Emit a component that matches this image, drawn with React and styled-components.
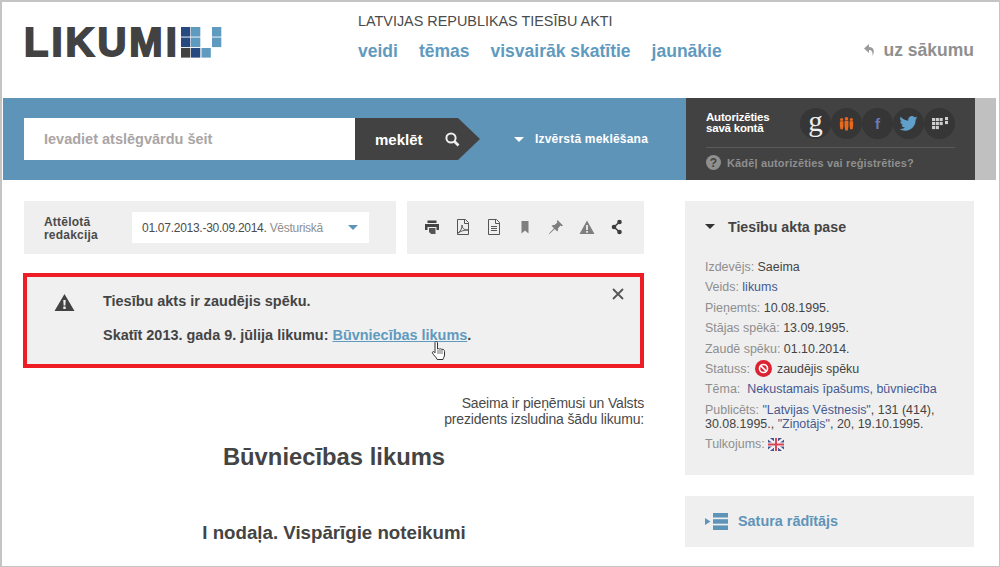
import React from "react";
import styled, { createGlobalStyle } from "styled-components";

const Global = createGlobalStyle`
  html, body { margin: 0; padding: 0; background: #fff; }
  body { font-family: "Liberation Sans", Arial, sans-serif; }
  * { box-sizing: border-box; }
`;
const Page = styled.div`
  width: 1000px; height: 567px; overflow: hidden; background: #fff;
  border: solid #c4c4c4; border-width: 2px 1px 1px 2px;
  display: flex; flex-direction: column; color: #444;
`;
const Header = styled.header`
  height: 96px; display: flex; padding: 0 25px 0 22px; flex: none;
`;
const LogoBox = styled.div`
  width: 334px; display: flex; align-items: flex-start; padding-top: 24px; gap: 1px;
`;
const LogoText = styled.div`
  font: 900 40px/32px "Liberation Sans", sans-serif; color: #424242;
  -webkit-text-stroke: 1.8px #424242; letter-spacing: 3px;
  height: 32px;
`;
const HeadMid = styled.div`
  flex: 1; padding-top: 11px;
`;
const Tagline = styled.div`
  font-size: 14.4px; line-height: 16px; color: #4b4b4b;
`;
const NavRow = styled.nav`
  display: flex; gap: 21px; margin-top: 12px; align-items: center;
`;
const NavLink = styled.a`
  font-size: 17.5px; font-weight: 700; line-height: 20px; color: #5f9abf;
`;
const Home = styled.a`
  margin-left: auto; margin-top: 38px; height: 20px; display: flex; align-items: center;
  gap: 9px; font-size: 17.5px; font-weight: 700; color: #8f8f8f; flex: none;
`;
const Banner = styled.section`
  height: 82px; margin-left: 1px; margin-right: 3px; display: flex; flex: none; background: #c0c0c0;
`;
const SearchZone = styled.div`
  width: 683px; background: #5f94b9; display: flex; align-items: center; padding-left: 21px;
`;
const SearchInput = styled.div`
  width: 331px; height: 42px; background: #fff; display: flex; align-items: center; padding-left: 20px;
  font-size: 14.5px; font-weight: 700; color: #aaa5a5;
`;
const SearchButton = styled.div`
  width: 125px; height: 42px; background: #424242; color: #fff; display: flex; align-items: center;
  padding-left: 20px; gap: 22px; font-size: 15px; font-weight: 700;
  clip-path: polygon(0 0, 103px 0, 125px 50%, 103px 100%, 0 100%);
`;
const Advanced = styled.div`
  display: flex; align-items: center; gap: 11px; margin-left: 34px; color: #fff; font-size: 12px; font-weight: 700;
  letter-spacing: .2px;
`;
const TriDown = styled.span`
  width: 0; height: 0; border: solid transparent; border-width: 5px 5.5px 0; border-top-color: ${p => p.$c || "#fff"};
  display: block; flex: none;
`;
const AuthZone = styled.div`
  width: 289px; background: #424242; padding: 10px 20px 0 20px;
`;
const AuthTop = styled.div`
  display: flex; align-items: center; height: 31px; justify-content: space-between;
`;
const AuthTitle = styled.div`
  font-size: 11.5px; line-height: 11px; font-weight: 700; color: #fff; letter-spacing: -.2px; margin-top: -2px;
`;
const Socials = styled.div`
  display: flex;
`;
const Social = styled.span`
  width: 31px; height: 31px; border-radius: 50%; background: #363636; display: flex; align-items: center;
  justify-content: center;
`;
const GlyphG = styled.span`
  font: 400 29px/24px "Liberation Serif", serif; color: #eee; margin-top: -5px;
`;
const GlyphF = styled.span`
  font: 700 15px/16px "Liberation Sans", sans-serif; color: #6f78b5;
`;
const AuthHelp = styled.div`
  margin-top: 8px; border-top: 1px solid #5a5a5a; display: flex; align-items: center; gap: 6px; height: 30px;
  font-size: 11px; font-weight: 700; color: #8f8f8f; letter-spacing: .15px;
`;
const Help = styled.span`
  width: 15px; height: 15px; border-radius: 50%; background: #8f8f8f; color: #424242; font-size: 12px;
  font-weight: 700; display: flex; align-items: center; justify-content: center;
`;
const Body = styled.div`
  display: flex; padding: 21px 0 0 22px; gap: 41px; flex: none;
`;
const Main = styled.main`
  width: 620px; display: flex; flex-direction: column;
`;
const Toolbar = styled.div`
  display: flex; gap: 11px; height: 53px;
`;
const Edition = styled.div`
  width: 372px; background: #efefef; display: flex; align-items: center; padding-left: 20px;
`;
const EditionLabel = styled.div`
  width: 88px; font-size: 12px; line-height: 13px; font-weight: 700; color: #4a4a4a; letter-spacing: .2px; margin-top: 2px;
`;
const Select = styled.div`
  width: 237px; height: 31px; background: #fff; display: flex; align-items: center; padding: 0 11px 0 10px;
  font-size: 12px; color: #4c4c4c; letter-spacing: -.27px;
`;
const Muted = styled.span`
  color: #8f8f8f;
`;
const SelectText = styled.span`
  flex: 1;
`;
const Tools = styled.div`
  flex: 1; background: #efefef; display: flex; align-items: center; padding: 0 0 2px 17px; gap: 15px;
`;
const Tool = styled.svg`
  width: 16px; height: 16px; flex: none; display: block;
`;
const Alert = styled.div`
  margin-top: 19px; margin-left: -1px; height: 95px; border: 4px solid #ee1c25; background: #f0f0f0;
  display: flex; position: relative; padding: 16px 0 0 27px;
`;
const AlertIcon = styled.svg`
  width: 21px; height: 19px; flex: none;
`;
const AlertBody = styled.div`
  margin-left: 28px; font-size: 14.45px; font-weight: 700; color: #444;
`;
const AlertLine = styled.div`
  line-height: 16px; margin-bottom: ${p => p.$mb || 0}px;
`;
const AlertLink = styled.a`
  color: #5f9abf; text-decoration: underline;
`;
const Close = styled.svg`
  position: absolute; right: 16px; top: 11px; width: 12px; height: 12px;
`;
const Cursor = styled.svg`
  position: absolute; left: 404px; top: 63px; width: 16px; height: 21px;
`;
const Intro = styled.div`
  margin-top: 27px; text-align: right; font-size: 14px; line-height: 16px; color: #4a4a4a;
  letter-spacing: -.17px;
`;
const Title = styled.h1`
  margin: 16px 0 0; font-size: 23.8px; line-height: 28px; font-weight: 700; color: #444; text-align: center;
`;
const Chapter = styled.h2`
  margin: 51px 0 0; font-size: 18.7px; line-height: 22px; font-weight: 700; color: #444; text-align: center;
`;
const Side = styled.aside`
  width: 289px; display: flex; flex-direction: column; gap: 21px;
`;
const Passport = styled.div`
  background: #efefef; height: 274px; padding: 17px 20px 0 20px;
`;
const PassportHead = styled.div`
  display: flex; align-items: center; gap: 13px; font-size: 14.2px; font-weight: 700; color: #444; height: 17px;
`;
const Facts = styled.div`
  margin-top: 25px; font-size: 12.45px; color: #444;
`;
const Fact = styled.div`
  line-height: 14px; height: ${p => p.$h || 14}px; margin-bottom: 6.4px; display: ${p => p.$flex ? "flex" : "block"}; align-items: center;
`;
const Key = styled.span`
  color: #8e8e8e;
`;
const Topic = styled.a`
  color: #46598f;
`;
const Stop = styled.span`
  width: 17px; height: 17px; border-radius: 50%; background: #dc2232; margin: -2px 5px; display: inline-flex;
  align-items: center; justify-content: center; flex: none;
`;
const TocCard = styled.div`
  background: #efefef; height: 51px; display: flex; align-items: center; padding: 0 0 1px 20px; gap: 10px;
  font-size: 14.4px; font-weight: 700; color: #5f94b9;
`;

const Squares = () => (
  <svg width="41" height="31" viewBox="0 0 41 31" style={{ flex: "none", marginTop: "1px" }}>
    {[
      [0, 0, "#264a80"], [10, 0, "#5f9abf"], [31, 0, "#5f9abf"],
      [0, 10.5, "#264a80"], [10, 10.5, "#5f9abf"], [31, 10.5, "#5f9abf"],
      [0, 21, "#424242"], [10, 21, "#264a80"], [20.5, 21, "#5f9abf"],
    ].map(([x, y, c], i) => <rect key={i} x={x} y={y} width="9.3" height="9.6" fill={c} />)}
  </svg>
);

export default function App() {
  return (
    <Page>
      <Global />
      <Header>
        <LogoBox>
          <LogoText>LIKUMI</LogoText>
          <Squares />
        </LogoBox>
        <HeadMid>
          <Tagline>LATVIJAS REPUBLIKAS TIESĪBU AKTI</Tagline>
          <NavRow>
            <NavLink>veidi</NavLink>
            <NavLink>tēmas</NavLink>
            <NavLink>visvairāk skatītie</NavLink>
            <NavLink>jaunākie</NavLink>
          </NavRow>
        </HeadMid>
        <Home>
          <svg width="11" height="12" viewBox="0 0 11 12"><path d="M5 0 0 4.5 5 9V6c2.5 0 4 1.5 3.500 6C10.500 9 11 3 5 3z" fill="#9a9a9a" /></svg>
          uz sākumu
        </Home>
      </Header>
      <Banner>
        <SearchZone>
          <SearchInput>Ievadiet atslēgvārdu šeit</SearchInput>
          <SearchButton>
            meklēt
            <svg width="15" height="15" viewBox="0 0 15 15" fill="none" stroke="#eee" strokeWidth="2"><circle cx="6" cy="6" r="4.6" /><path d="m9.500 9.500 4 4" strokeWidth="2.6" /></svg>
          </SearchButton>
          <Advanced><TriDown />Izvērstā meklēšana</Advanced>
        </SearchZone>
        <AuthZone>
          <AuthTop>
            <AuthTitle>Autorizēties<br />savā kontā</AuthTitle>
            <Socials>
              <Social><GlyphG>g</GlyphG></Social>
              <Social>
                <svg width="15" height="15" viewBox="0 0 17 17" fill="#e8681d"><circle cx="8.5" cy="3" r="2" /><circle cx="3" cy="4" r="1.7" /><circle cx="14" cy="4" r="1.7" /><path d="M6.300 5.500h4.400v6l-.8 5H7.100l-.8-5zM1 6h4v5l-.6 4H1.600L1 11zM12 6h4v5l-.6 4h-2.800l-.6-4z" /></svg>
              </Social>
              <Social><GlyphF>f</GlyphF></Social>
              <Social>
                <svg width="19" height="15" viewBox="0 0 24 20" fill="#5f9fc9"><path d="M24 2.400a10 10 0 0 1-2.800.8A5 5 0 0 0 23.300.500a10 10 0 0 1-3.100 1.200 4.900 4.900 0 0 0-8.400 4.500A14 14 0 0 1 1.700.900a4.900 4.900 0 0 0 1.500 6.600 5 5 0 0 1-2.200-.6c0 2.400 1.700 4.400 3.900 4.900a5 5 0 0 1-2.200.1 4.900 4.900 0 0 0 4.600 3.400A9.900 9.900 0 0 1 0 17.300 14 14 0 0 0 21.500 5a10 10 0 0 0 2.500-2.600z" /></svg>
              </Social>
              <Social>
                <svg width="16" height="13" viewBox="0 0 16 13" fill="#cfcfcf">
                  {[[0, 1], [3.8, 1], [7.6, 1], [0, 5], [3.8, 5], [7.6, 5], [0, 9], [3.8, 9], [13, 0], [13, 4]].map(([x, y], i) => <rect key={i} x={x} y={y} width="3.1" height="3.1" />)}
                </svg>
              </Social>
            </Socials>
          </AuthTop>
          <AuthHelp><Help>?</Help>Kādēļ autorizēties vai reģistrēties?</AuthHelp>
        </AuthZone>
      </Banner>
      <Body>
        <Main>
          <Toolbar>
            <Edition>
              <EditionLabel>Attēlotā<br />redakcija</EditionLabel>
              <Select>
                <SelectText>01.07.2013.-30.09.2014. <Muted>Vēsturiskā</Muted></SelectText>
                <TriDown $c="#5f94b9" />
              </Select>
            </Edition>
            <Tools>
              <Tool viewBox="0 0 16 16"><path d="M3.500 1.500h9V4h-9zM1 5h14v6h-2.500V8h-9v3H1z" fill="#444" /><path d="M5 9h6.500v6H7.200L5 13z" fill="#555" /></Tool>
              <Tool viewBox="0 0 16 16" fill="none" stroke="#555"><path d="M2.500.500h8l3 3v12h-11z" /><path d="M9.500.500v4h4" /><path d="M3 14c3-2 4-5 4-8 0 3 2 5 6 5-4 0-7 1-10 3z" /></Tool>
              <Tool viewBox="0 0 16 16" fill="none" stroke="#555"><path d="M2.500.500h8l3 3v12h-11z" /><path d="M9.500.500v4h4M5 7.500h6M5 9.500h6M5 11.500h6" /></Tool>
              <Tool viewBox="0 0 16 16"><path d="M4.500 2h7v12.500L8 11.500l-3.500 3z" fill="#7e7e7e" /></Tool>
              <Tool viewBox="0 0 16 16"><path d="M9.500 1 15 6.500l-1.500.7-1-.6L10 9.500c.3 1.200 0 2.200-.8 3L6.700 10 1.500 15l-.5-.5L6 9.300 3.500 6.800c.8-.8 1.800-1.100 3-.8L9.400 3.500l-.6-1z" fill="#7e7e7e" /></Tool>
              <Tool viewBox="0 0 16 16"><path fillRule="evenodd" d="M8 1.500 15.500 15H.5zM7.100 6h1.800v5H7.100zm0 6h1.800v1.700H7.100z" fill="#7e7e7e" /></Tool>
              <Tool viewBox="0 0 16 16"><circle cx="9.500" cy="3" r="2.300" fill="#3d3d3d" /><circle cx="4" cy="8" r="2.300" fill="#3d3d3d" /><circle cx="9.500" cy="13" r="2.300" fill="#3d3d3d" /><path d="M9.500 3 4 8l5.500 5" stroke="#3d3d3d" strokeWidth="1.6" fill="none" /></Tool>
            </Tools>
          </Toolbar>
          <Alert>
            <AlertIcon viewBox="0 0 21 19"><path fillRule="evenodd" d="M10.500 1 20.500 18H.5zM9.300 7h2.400l-.3 5.500H9.600zm0 6.500h2.400V16H9.300z" fill="#424242" /></AlertIcon>
            <AlertBody>
              <AlertLine $mb={18}>Tiesību akts ir zaudējis spēku.</AlertLine>
              <AlertLine>Skatīt 2013. gada 9. jūlija likumu: <AlertLink>Būvniecības likums</AlertLink>.</AlertLine>
            </AlertBody>
            <Close viewBox="0 0 12 12"><path d="M1 1l10 10M11 1 1 11" stroke="#555" strokeWidth="1.8" /></Close>
            <Cursor viewBox="0 0 16 21"><path d="M5 1.500c1 0 1.500.6 1.500 1.500v6l1-.3 1 .3 1.200-.1 1.100.4 1.300.1c1 .3 1.400 1 1.400 2v3.600c0 1.500-1 2.600-1.500 4.500H6.200c-.6-2-3.900-4.500-4.700-6.500-.4-1 .5-1.700 1.500-1.200l1 1V3c0-.9 0-1.500 1-1.500z" fill="#fff" stroke="#333" strokeWidth="1" /><path d="M7 10v4M9 10v4M11 10v4" stroke="#333" strokeWidth=".7" /></Cursor>
          </Alert>
          <Intro>Saeima ir pieņēmusi un Valsts<br />prezidents izsludina šādu likumu:</Intro>
          <Title>Būvniecības likums</Title>
          <Chapter>I nodaļa. Vispārīgie noteikumi</Chapter>
        </Main>
        <Side>
          <Passport>
            <PassportHead><TriDown $c="#333" />Tiesību akta pase</PassportHead>
            <Facts>
              <Fact><Key>Izdevējs:</Key> Saeima</Fact>
              <Fact><Key>Veids:</Key> <Topic>likums</Topic></Fact>
              <Fact><Key>Pieņemts:</Key> 10.08.1995.</Fact>
              <Fact><Key>Stājas spēkā:</Key> 13.09.1995.</Fact>
              <Fact><Key>Zaudē spēku:</Key> 01.10.2014.</Fact>
              <Fact $flex><Key>Statuss:</Key><Stop><svg width="11" height="11" viewBox="0 0 11 11" fill="none" stroke="#fff" strokeWidth="1.6"><circle cx="5.500" cy="5.500" r="4" /><path d="m2.700 2.700 5.600 5.600" /></svg></Stop>zaudējis spēku</Fact>
              <Fact><Key>Tēma:</Key>&nbsp; <Topic>Nekustamais īpašums, būvniecība</Topic></Fact>
              <Fact $h={28}><Key>Publicēts:</Key> <Topic>"Latvijas Vēstnesis"</Topic>, 131 (414),<br />30.08.1995., <Topic>"Ziņotājs"</Topic>, 20, 19.10.1995.</Fact>
              <Fact $flex>
                <Key>Tulkojums:</Key>&nbsp;
                <svg width="16" height="13" viewBox="0 0 16 13" opacity=".85"><rect width="16" height="13" rx="1.5" fill="#2a3a80" /><path d="M0 0l16 13M16 0 0 13" stroke="#f3f3f3" strokeWidth="2.4" /><path d="M8 0v13M0 6.500h16" stroke="#f3f3f3" strokeWidth="4" /><path d="M8 0v13M0 6.500h16" stroke="#d6283a" strokeWidth="2" /></svg>
              </Fact>
            </Facts>
          </Passport>
          <TocCard>
            <svg width="23" height="17" viewBox="0 0 23 17" fill="#5f94b9"><path d="M0 5 5.500 8.500 0 12z" /><rect x="8" y="0" width="15" height="4.500" /><rect x="8" y="6.200" width="15" height="4.500" /><rect x="8" y="12.400" width="15" height="4.600" /></svg>
            Satura rādītājs
          </TocCard>
        </Side>
      </Body>
    </Page>
  );
}
